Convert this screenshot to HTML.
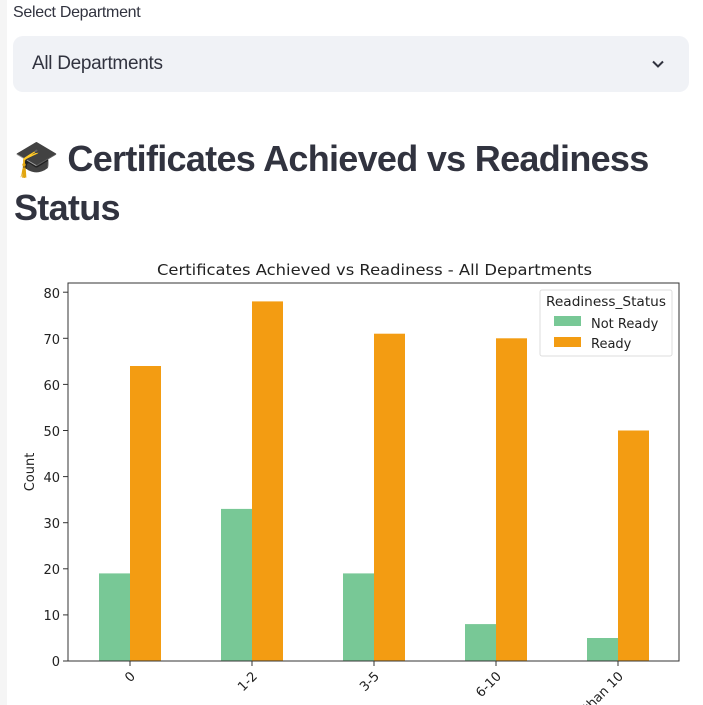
<!DOCTYPE html>
<html><head><meta charset="utf-8"><style>
html,body{margin:0;width:703px;height:705px;overflow:hidden}
body{background:#fff;font-family:"Liberation Sans",sans-serif;position:relative}
.strip{position:absolute;left:0;top:0;width:7px;height:705px;background:#f5f5f5}
.lbl{position:absolute;left:13px;top:4px;font-size:16px;color:#31333f;letter-spacing:-0.3px}
.sel{position:absolute;left:13px;top:36px;width:676px;height:56px;background:#f0f2f6;border-radius:10px}
.sel span{position:absolute;left:19px;top:17px;font-size:19px;color:#31333f;letter-spacing:-0.3px}
h1{position:absolute;left:14px;top:134px;margin:0;font-size:36px;font-weight:bold;color:#31333f;line-height:49px;letter-spacing:-0.7px;width:680px}
svg{position:absolute;left:0;top:0}
</style></head><body>
<div class="strip"></div>
<div class="lbl">Select Department</div>
<div class="sel"><span>All Departments</span>
<svg style="left:638px;top:21px" width="14" height="14" viewBox="0 0 14 14"><path d="M2 4.5 L7 9.5 L12 4.5" fill="none" stroke="#31333f" stroke-width="2"/></svg></div>
<h1>🎓 Certificates Achieved vs Readiness Status</h1>
<svg width="703" height="705" style="pointer-events:none">
<g font-family="DejaVu Sans, sans-serif" fill="#222">
<text x="157" y="275" font-size="15" textLength="435" lengthAdjust="spacingAndGlyphs">Certificates Achieved vs Readiness - All Departments</text>
<g fill="#78c896">
<rect x="99" y="573.4" width="31" height="87.6"/>
<rect x="221" y="508.9" width="31" height="152.1"/>
<rect x="343" y="573.4" width="31" height="87.6"/>
<rect x="465" y="624.1" width="31" height="36.9"/>
<rect x="587" y="638" width="31" height="23"/>
</g>
<g fill="#f39c12">
<rect x="130" y="366" width="31" height="295"/>
<rect x="252" y="301.4" width="31" height="359.6"/>
<rect x="374" y="333.7" width="31" height="327.3"/>
<rect x="496" y="338.3" width="31" height="322.7"/>
<rect x="618" y="430.5" width="31" height="230.5"/>
</g>
<rect x="68" y="283" width="611" height="378" fill="none" stroke="#333" stroke-width="1"/>
<g stroke="#333">
<line x1="63" y1="661" x2="68" y2="661"/><line x1="63" y1="614.9" x2="68" y2="614.9"/><line x1="63" y1="568.8" x2="68" y2="568.8"/><line x1="63" y1="522.7" x2="68" y2="522.7"/><line x1="63" y1="476.6" x2="68" y2="476.6"/><line x1="63" y1="430.5" x2="68" y2="430.5"/><line x1="63" y1="384.4" x2="68" y2="384.4"/><line x1="63" y1="338.3" x2="68" y2="338.3"/><line x1="63" y1="292.2" x2="68" y2="292.2"/>
<line x1="130" y1="661" x2="130" y2="666"/><line x1="252" y1="661" x2="252" y2="666"/><line x1="374" y1="661" x2="374" y2="666"/><line x1="496" y1="661" x2="496" y2="666"/><line x1="618" y1="661" x2="618" y2="666"/>
</g>
<g font-size="13" text-anchor="end">
<text x="60" y="666">0</text><text x="60" y="620">10</text><text x="60" y="574">20</text><text x="60" y="528">30</text><text x="60" y="482">40</text><text x="60" y="436">50</text><text x="60" y="390">60</text><text x="60" y="344">70</text><text x="60" y="298">80</text>
<text transform="translate(136,677) rotate(-45)">0</text>
<text transform="translate(258,677) rotate(-45)">1-2</text>
<text transform="translate(380,677) rotate(-45)">3-5</text>
<text transform="translate(502,677) rotate(-45)">6-10</text>
<text transform="translate(624,677) rotate(-45)">More than 10</text>
</g>
<text transform="translate(34,472) rotate(-90)" font-size="13" text-anchor="middle">Count</text>
<rect x="540" y="290" width="132" height="66" fill="#fff" fill-opacity="0.8" stroke="#ddd" rx="2"/>
<text x="606" y="306" font-size="13" text-anchor="middle" textLength="120" lengthAdjust="spacingAndGlyphs">Readiness_Status</text>
<rect x="554" y="316" width="27" height="10" fill="#78c896"/>
<text x="591" y="328" font-size="13">Not Ready</text>
<rect x="554" y="337" width="27" height="10" fill="#f39c12"/>
<text x="591" y="348" font-size="13">Ready</text>
</g>
</svg>
</body></html>
